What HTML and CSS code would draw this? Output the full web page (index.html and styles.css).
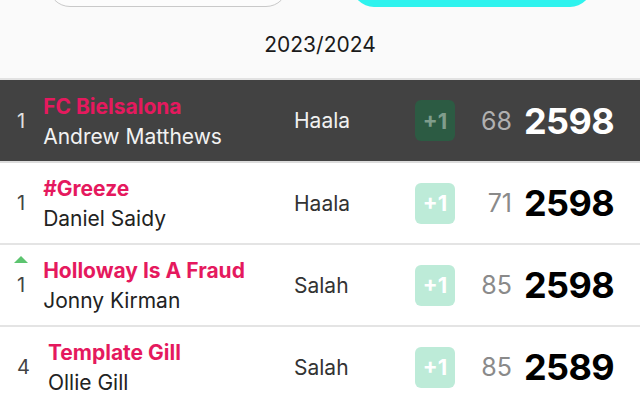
FILE: index.html
```html
<!DOCTYPE html>
<html>
<head>
<meta charset="utf-8">
<link rel="stylesheet" href="styles.css">
</head>
<body>
<div class="page">
  <header class="header">
    <div class="tabs">
      <div class="tab tab-outline"></div>
      <div class="tab tab-active"></div>
    </div>
    <div class="season">2023/2024</div>
  </header>
  <ul class="table">
    <li class="row row-me">
      <div class="rank">1</div>
      <div class="names"><div class="team">FC Bielsalona</div><div class="manager">Andrew Matthews</div></div>
      <div class="pick">Haala</div>
      <div class="badge">+1</div>
      <div class="gw">68</div>
      <div class="total">2598</div>
    </li>
    <li class="row">
      <div class="rank">1</div>
      <div class="names"><div class="team">#Greeze</div><div class="manager">Daniel Saidy</div></div>
      <div class="pick">Haala</div>
      <div class="badge">+1</div>
      <div class="gw">71</div>
      <div class="total">2598</div>
    </li>
    <li class="row">
      <div class="rank"><span class="up"></span>1</div>
      <div class="names"><div class="team">Holloway Is A Fraud</div><div class="manager">Jonny Kirman</div></div>
      <div class="pick">Salah</div>
      <div class="badge">+1</div>
      <div class="gw">85</div>
      <div class="total">2598</div>
    </li>
    <li class="row">
      <div class="rank">4</div>
      <div class="names"><div class="team">Template Gill</div><div class="manager">Ollie Gill</div></div>
      <div class="pick">Salah</div>
      <div class="badge">+1</div>
      <div class="gw">85</div>
      <div class="total">2589</div>
    </li>
  </ul>
</div>
</body>
</html>
```
FILE: styles.css
```css
* { box-sizing: border-box; }
html, body { margin: 0; padding: 0; }
body {
  background: #fafafa;
  font-family: Inter, "Noto Sans", sans-serif;
  color: #222;
  overflow: hidden;
}
.page { width: 640px; height: 406px; overflow: hidden; }
.header { height: 78px; display: flex; flex-direction: column; align-items: center; }
.tabs { display: flex; gap: 64px; margin-top: -37px; }
.tab { width: 240px; height: 44px; border-radius: 22px; }
.tab-outline { border: 1.5px solid #c9c9c9; background: #fcfcfc; }
.tab-active { background: #2ef3ee; }
.season { margin-top: 25px; font-size: 21px; line-height: 26px; color: #1a1a1a; }
.table { list-style: none; margin: 0; padding: 0; border-top: 2px solid #e2e2e2; }
.row {
  height: 82px;
  display: grid;
  grid-template-columns: auto 1fr 121px 40px 57px 102px;
  align-items: center;
  padding: 0 26px 0 17px;
  background: #fff;
  border-bottom: 2px solid #e4e4e4;
}
.rank { position: relative; font-size: 20px; color: #444; padding-right: 18px; }
.up {
  position: absolute; left: -3px; top: -17px;
  width: 0; height: 0;
  border-left: 7.5px solid transparent;
  border-right: 7.5px solid transparent;
  border-bottom: 7px solid #5cc46f;
}
.names { display: flex; flex-direction: column; gap: 5px; margin-top: 1px; }
.team { font-size: 21px; font-weight: 700; color: #e5195e; line-height: 25px; }
.manager { font-size: 21px; color: #222; line-height: 25px; }
.pick { font-size: 21px; color: #333; }
.badge {
  width: 40px; height: 41px; border-radius: 6px;
  background: #bdebd8; color: #fff;
  font-size: 22px; font-weight: 700;
  display: flex; align-items: center; justify-content: center;
}
.gw { font-size: 25px; color: #8a8a8a; text-align: right; }
.total { font-size: 36px; font-weight: 700; color: #000; text-align: right; letter-spacing: -0.6px; }
.row-me { background: #424242; border-bottom-color: #dcdcdc; height: 83px; }
.row-me .rank { color: #e0e0e0; }
.row-me .manager { color: #f2f2f2; }
.row-me .pick { color: #f0f0f0; }
.row-me .badge { background: #2c5b43; color: #7f9d8c; }
.row-me .gw { color: #b0b0b0; }
.row-me .total { color: #fff; }
```
